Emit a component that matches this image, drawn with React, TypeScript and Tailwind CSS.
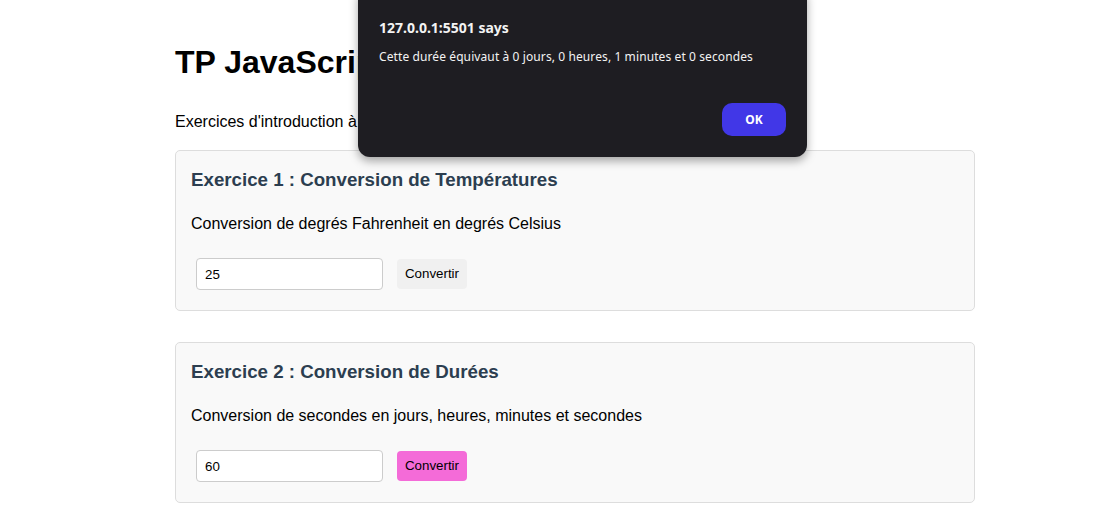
import React from 'react'

type ExerciseProps = {
  title: string
  description: string
  value: string
  active?: boolean
}

function ExerciseCard({ title, description, value, active }: ExerciseProps) {
  return (
    <section className="w-[800px] rounded-[5px] border border-[#dddddd] bg-[#f9f9f9] px-[15px] pt-[18px] pb-[15px]">
      <h3 className="text-[18.72px] font-bold leading-[21px] text-[#2c3e50]">{title}</h3>
      <p className="mt-[25px] text-[16px] leading-[18px] text-black">{description}</p>
      <div className="mt-[20px] flex items-center">
        <input
          type="text"
          defaultValue={value}
          className="m-[5px] h-[32px] w-[187px] rounded-[4px] border border-[#cccccc] bg-white px-[8px] text-[13.33px] text-black outline-none"
        />
        <button
          type="button"
          className={[
            'ml-[9px] h-[30px] w-[70px] rounded-[4px] text-[13.33px] text-black',
            active ? 'bg-[#f46bd8]' : 'bg-[#f0f0f0]',
          ].join(' ')}
        >
          Convertir
        </button>
      </div>
    </section>
  )
}

function AlertDialog() {
  return (
    <div
      className="absolute left-[358px] top-[-14px] w-[449px] rounded-[12px] bg-[#1e1d22] px-[21px] pt-[32px] pb-[21px] text-[#f3f3f3] shadow-[0_4px_10px_rgba(0,0,0,0.35)]"
      style={{ fontFamily: '"Noto Sans", "Open Sans", sans-serif' }}
    >
      <div className="text-[14px] font-bold leading-[20px]">127.0.0.1:5501 says</div>
      <div className="mt-[11px] text-[12px] leading-[16px] tracking-[0.1px]">
        Cette durée équivaut à 0 jours, 0 heures, 1 minutes et 0 secondes
      </div>
      <div className="mt-[38px] flex justify-end">
        <button
          type="button"
          className="h-[33px] w-[64px] rounded-[10px] bg-[#4137e7] text-[12px] font-bold text-white"
        >
          OK
        </button>
      </div>
    </div>
  )
}

export default function App() {
  return (
    <div
      className="relative min-h-[519px] overflow-hidden bg-white text-black"
      style={{ fontFamily: '"Liberation Sans", Arial, sans-serif' }}
    >
      <main className="ml-[175px] w-[800px] pt-[44px]">
        <h1 className="text-[32px] font-bold leading-[37px]">TP JavaScript</h1>
        <p className="mt-[32px] text-[16px] leading-[18px]">
          Exercices d'introduction à JavaScript
        </p>
        <div className="mt-[19px] flex flex-col gap-[31px]">
          <ExerciseCard
            title="Exercice 1 : Conversion de Températures"
            description="Conversion de degrés Fahrenheit en degrés Celsius"
            value="25"
          />
          <ExerciseCard
            title="Exercice 2 : Conversion de Durées"
            description="Conversion de secondes en jours, heures, minutes et secondes"
            value="60"
            active
          />
        </div>
      </main>
      <AlertDialog />
    </div>
  )
}
